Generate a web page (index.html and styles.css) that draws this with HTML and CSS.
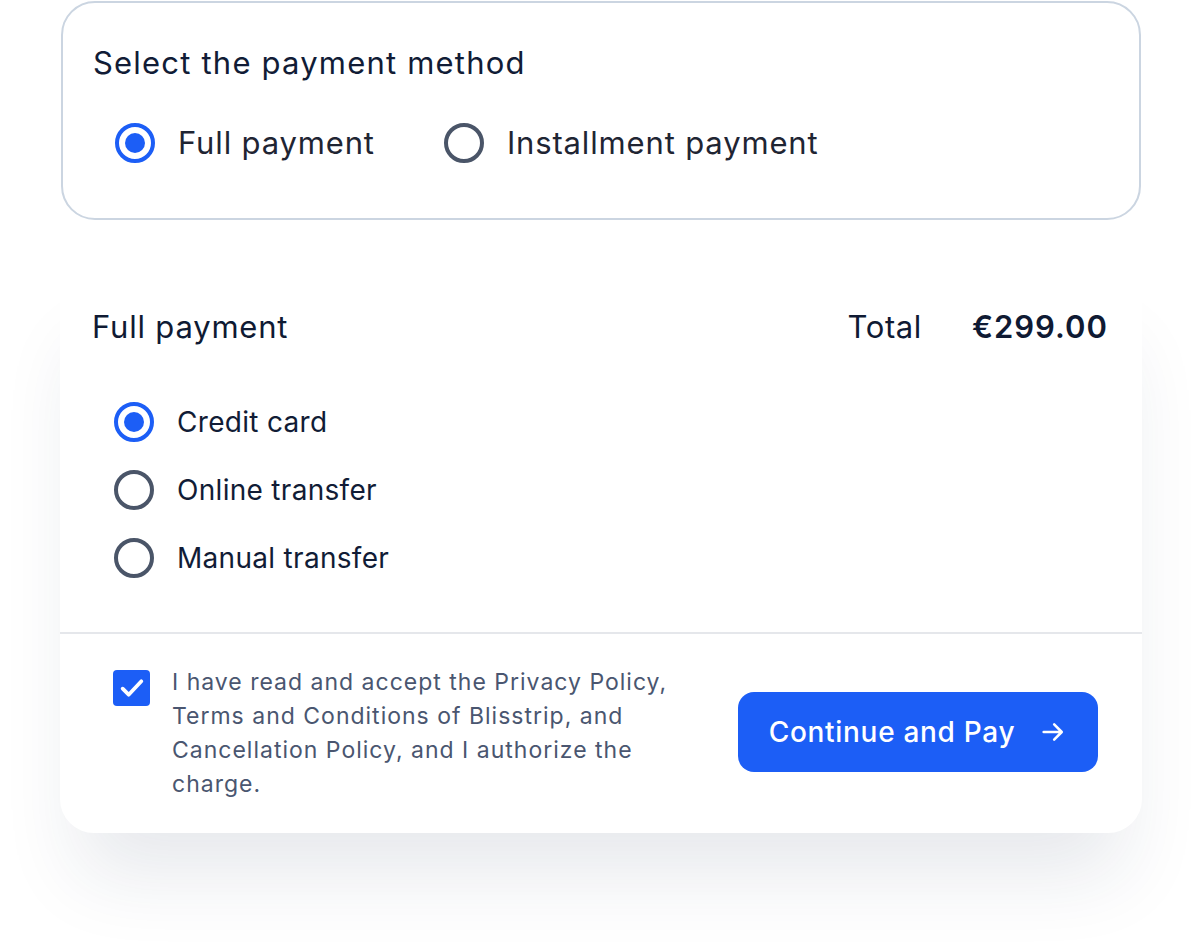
FILE: index.html
```html
<!DOCTYPE html>
<html>
<head>
<meta charset="utf-8">
<link rel="stylesheet" href="styles.css">
</head>
<body>
<div class="page">
  <section class="method-card">
    <h2 class="title">Select the payment method</h2>
    <div class="method-row">
      <label class="radio-item">
        <span class="radio checked"></span>
        <span class="radio-label big">Full payment</span>
      </label>
      <label class="radio-item">
        <span class="radio"></span>
        <span class="radio-label big">Installment payment</span>
      </label>
    </div>
  </section>

  <section class="pay-card">
    <div class="pay-head">
      <span class="pay-title">Full payment</span>
      <div class="total">
        <span class="total-label">Total</span>
        <span class="total-value">€299.00</span>
      </div>
    </div>
    <div class="options">
      <label class="radio-item">
        <span class="radio checked"></span>
        <span class="radio-label">Credit card</span>
      </label>
      <label class="radio-item">
        <span class="radio"></span>
        <span class="radio-label">Online transfer</span>
      </label>
      <label class="radio-item">
        <span class="radio"></span>
        <span class="radio-label">Manual transfer</span>
      </label>
    </div>
    <div class="pay-foot">
      <div class="terms">
        <span class="checkbox">
          <svg viewBox="0 0 24 24" width="24" height="24"><path d="M5 12.5l4.5 4.5L19 7" fill="none" stroke="#fff" stroke-width="2.8" stroke-linecap="round" stroke-linejoin="round"/></svg>
        </span>
        <p class="terms-text">I have read and accept the Privacy Policy, Terms and Conditions of Blisstrip, and Cancellation Policy, and I authorize the charge.</p>
      </div>
      <button class="pay-btn">
        <span>Continue and Pay</span>
        <svg viewBox="0 0 24 24" width="28" height="28"><path d="M4 12h15M13 5.5l6.5 6.5-6.5 6.5" fill="none" stroke="#fff" stroke-width="2.2" stroke-linecap="round" stroke-linejoin="round"/></svg>
      </button>
    </div>
  </section>
</div>
</body>
</html>
```

FILE: styles.css
```css
* { box-sizing: border-box; }
html, body { margin: 0; padding: 0; background: #ffffff; }
body {
  font-family: "Inter", "Noto Sans", sans-serif;
  color: #0f1a33;
  min-height: 952px;
}
.page {
  width: 1082px;
  margin-left: 60px;
  padding-top: 1px;
}
.method-card {
  border: 2px solid #cbd5e1;
  border-radius: 34px;
  padding: 40px 31px 0 30px;
  height: 219px;
  margin-left: 1px;
  width: 1080px;
}
.title {
  margin: 0;
  font-size: 31px;
  font-weight: 400;
  line-height: 40px;
  letter-spacing: 1.2px;
  color: #111c36;
}
.method-row {
  display: flex;
  gap: 69px;
  margin-top: 40px;
  padding-left: 22px;
}
.radio-item {
  display: flex;
  align-items: center;
  gap: 23px;
}
.radio {
  width: 40px;
  height: 40px;
  border-radius: 50%;
  border: 4px solid #4a5568;
  flex: none;
  display: flex;
  align-items: center;
  justify-content: center;
}
.radio.checked { border-color: #1c5ef6; }
.radio.checked::after {
  content: "";
  width: 20px;
  height: 20px;
  border-radius: 50%;
  background: #1c5ef6;
}
.radio-label {
  font-size: 28px;
  line-height: 40px;
  color: #111c36;
  letter-spacing: 0.3px;
}
.radio-label.big { font-size: 31px; color: #1f2533; letter-spacing: 0.85px; }

.pay-card {
  margin-top: 50px;
  background: #fff;
  border-radius: 0 0 34px 34px;
  box-shadow: 0 60px 80px -20px rgba(30, 41, 80, 0.11);
  padding-top: 36px;
}
.pay-head {
  display: flex;
  justify-content: space-between;
  align-items: center;
  padding: 0 34px 0 32px;
  height: 40px;
}
.pay-title { font-size: 31px; font-weight: 400; letter-spacing: 0.8px; }
.total { display: flex; align-items: center; gap: 50px; }
.total-label { font-size: 31px; letter-spacing: 0.6px; }
.total-value { font-size: 31px; font-weight: 600; letter-spacing: 1px; }

.options {
  display: flex;
  flex-direction: column;
  gap: 28px;
  padding: 56px 0 54px 54px;
  border-bottom: 2px solid #e5e7eb;
}
.pay-foot {
  display: flex;
  justify-content: space-between;
  align-items: flex-start;
  padding: 36px 44px 32px 53px;
}
.terms { display: flex; gap: 22px; align-items: flex-start; }
.checkbox {
  width: 37px;
  height: 36px;
  border-radius: 4px;
  background: #1c5ef6;
  display: flex;
  align-items: center;
  justify-content: center;
  flex: none;
}
.checkbox svg { width: 32px; height: 32px; }
.terms-text {
  margin: -5px 0 0 0;
  width: 520px;
  font-size: 23px;
  line-height: 34px;
  color: #4a5670;
  letter-spacing: 1px;
}
.pay-btn {
  margin-top: 22px;
  width: 360px;
  height: 80px;
  border: none;
  border-radius: 16px;
  background: #1c5ef6;
  color: #fff;
  font-family: inherit;
  font-size: 28px;
  font-weight: 500;
  letter-spacing: 0.7px;
  display: flex;
  align-items: center;
  justify-content: center;
  gap: 24px;
  padding: 0;
}
```
